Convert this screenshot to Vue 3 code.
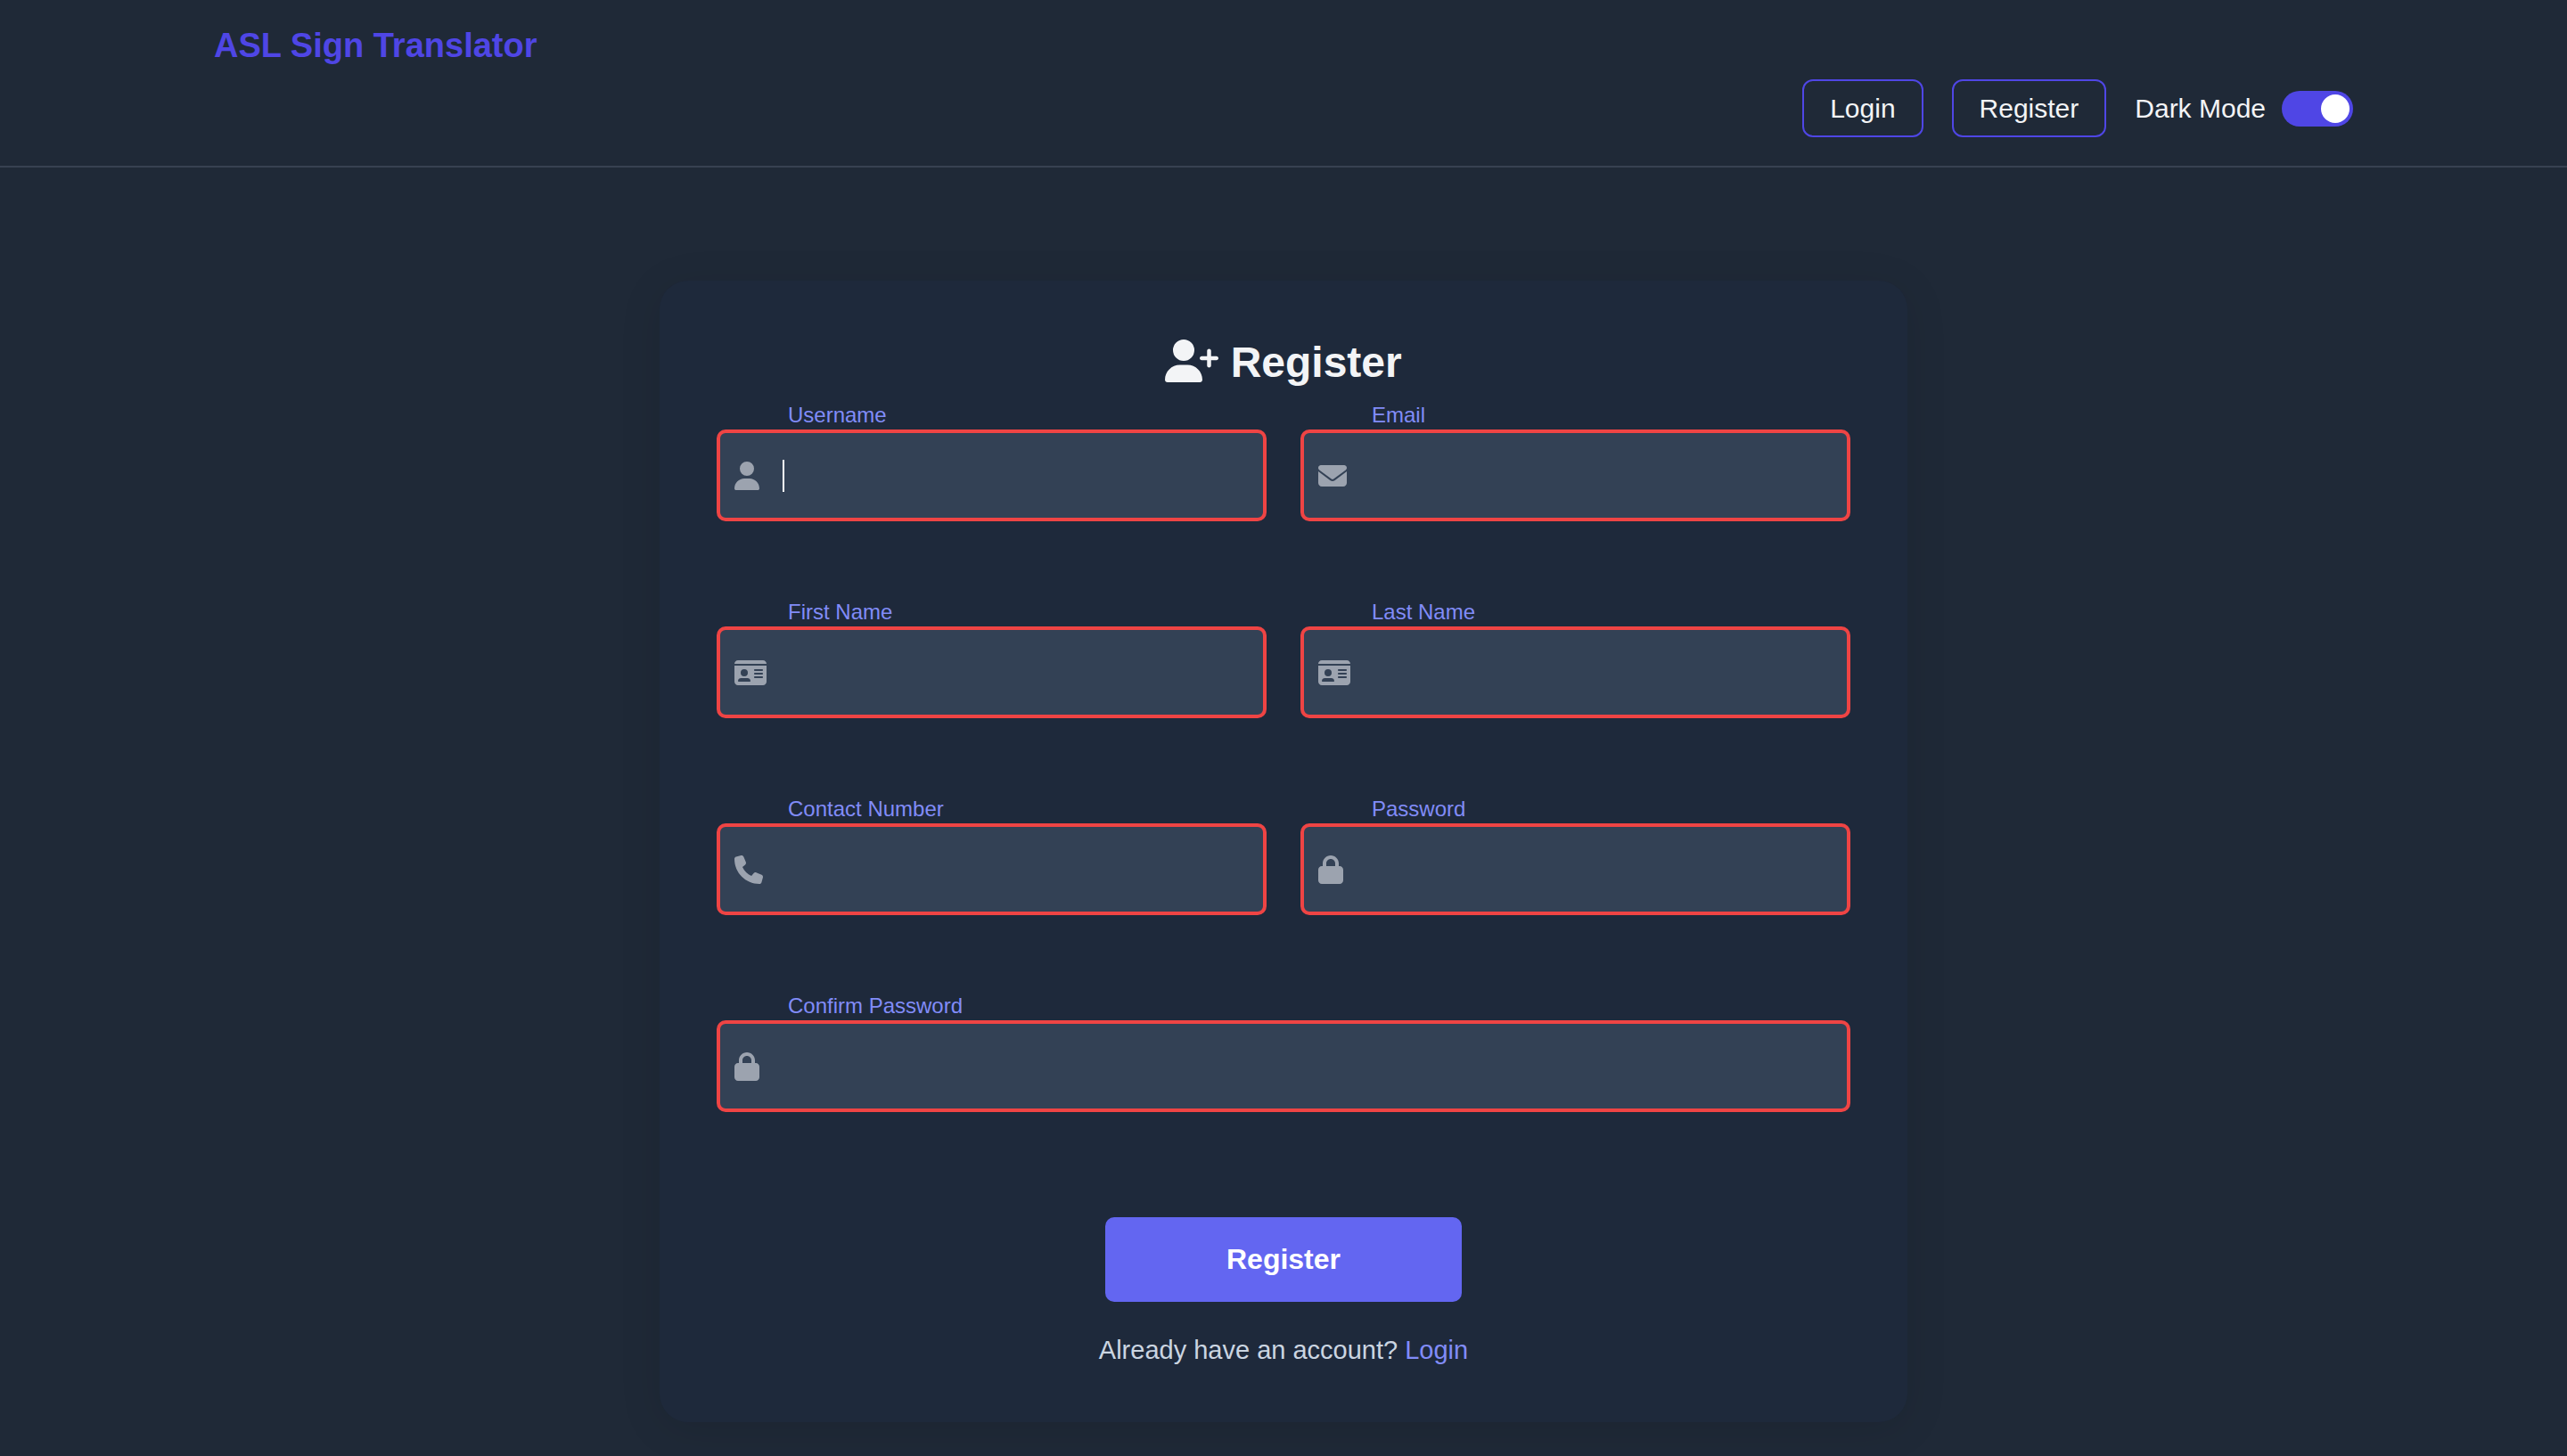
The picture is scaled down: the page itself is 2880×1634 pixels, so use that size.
<script setup>
import { ref, reactive } from 'vue'

const icons = {
  user: { w: 448, d: 'M224 256A128 128 0 1 0 224 0a128 128 0 1 0 0 256zm-45.7 48C79.8 304 0 383.8 0 482.3C0 498.7 13.3 512 29.7 512H418.3c16.4 0 29.7-13.3 29.7-29.7C448 383.8 368.2 304 269.7 304H178.3z' },
  envelope: { w: 512, d: 'M48 64C21.5 64 0 85.5 0 112c0 15.1 7.1 29.3 19.2 38.4L236.8 313.6c11.4 8.5 27 8.5 38.4 0L492.8 150.4c12.1-9.1 19.2-23.3 19.2-38.4c0-26.5-21.5-48-48-48H48zM0 176V384c0 35.3 28.7 64 64 64H448c35.3 0 64-28.7 64-64V176L294.4 339.2c-22.8 17.1-54 17.1-76.8 0L0 176z' },
  idCard: { w: 576, d: 'M0 96l576 0c0-35.3-28.7-64-64-64H64C28.7 32 0 60.7 0 96zm0 32V416c0 35.3 28.7 64 64 64H512c35.3 0 64-28.7 64-64V128H0zM64 405.3c0-29.5 23.9-53.3 53.3-53.3H234.7c29.5 0 53.3 23.9 53.3 53.3c0 5.9-4.8 10.7-10.7 10.7H74.7c-5.9 0-10.7-4.8-10.7-10.7zM176 192a64 64 0 1 1 0 128 64 64 0 1 1 0-128zm176 16c0-8.8 7.2-16 16-16H496c8.8 0 16 7.2 16 16s-7.2 16-16 16H368c-8.8 0-16-7.2-16-16zm0 64c0-8.8 7.2-16 16-16H496c8.8 0 16 7.2 16 16s-7.2 16-16 16H368c-8.8 0-16-7.2-16-16zm0 64c0-8.8 7.2-16 16-16H496c8.8 0 16 7.2 16 16s-7.2 16-16 16H368c-8.8 0-16-7.2-16-16z' },
  phone: { w: 512, d: 'M164.9 24.6c-7.7-18.6-28-28.5-47.4-23.2l-88 24C12.1 30.2 0 46 0 64C0 311.4 200.6 512 448 512c18 0 33.8-12.1 38.6-29.5l24-88c5.3-19.4-4.6-39.7-23.2-47.4l-96-40c-16.3-6.8-35.2-2.1-46.3 11.6L304.7 368C234.3 334.7 177.3 277.7 144 207.3L193.3 167c13.7-11.2 18.4-30 11.6-46.3l-40-96z' },
  lock: { w: 448, d: 'M144 144v48H304V144c0-44.2-35.8-80-80-80s-80 35.8-80 80zM80 192V144C80 64.5 144.5 0 224 0s144 64.5 144 144v48h16c35.3 0 64 28.7 64 64V448c0 35.3-28.7 64-64 64H64c-35.3 0-64-28.7-64-64V256c0-35.3 28.7-64 64-64H80z' },
}

const fields = [
  { id: 'username', label: 'Username', type: 'text', icon: icons.user },
  { id: 'email', label: 'Email', type: 'email', icon: icons.envelope },
  { id: 'first-name', label: 'First Name', type: 'text', icon: icons.idCard },
  { id: 'last-name', label: 'Last Name', type: 'text', icon: icons.idCard },
  { id: 'contact', label: 'Contact Number', type: 'tel', icon: icons.phone },
  { id: 'password', label: 'Password', type: 'password', icon: icons.lock },
  { id: 'confirm', label: 'Confirm Password', type: 'password', icon: icons.lock, wide: true },
]

const form = reactive(Object.fromEntries(fields.map((f) => [f.id, ''])))
const darkMode = ref(true)
</script>

<template>
  <div class="page">
    <header class="header">
      <div class="header-inner">
        <a class="brand" href="#">ASL Sign Translator</a>
        <nav class="nav">
          <a class="nav-link" href="#login">Login</a>
          <a class="nav-link" href="#register">Register</a>
          <label class="theme">
            <span>Dark Mode</span>
            <input v-model="darkMode" class="switch" type="checkbox" />
          </label>
        </nav>
      </div>
    </header>

    <main class="main">
      <form class="card" @submit.prevent>
        <h1 class="title">
          <svg class="title-icon" viewBox="0 0 640 512" fill="currentColor" aria-hidden="true">
            <path d="M96 128a128 128 0 1 1 256 0A128 128 0 1 1 96 128zM0 482.3C0 383.8 79.8 304 178.3 304h91.4C368.2 304 448 383.8 448 482.3c0 16.4-13.3 29.7-29.7 29.7H29.7C13.3 512 0 498.7 0 482.3zM504 312V248H440c-13.3 0-24-10.7-24-24s10.7-24 24-24h64V136c0-13.3 10.7-24 24-24s24 10.7 24 24v64h64c13.3 0 24 10.7 24 24s-10.7 24-24 24H552v64c0 13.3-10.7 24-24 24s-24-10.7-24-24z" />
          </svg>
          Register
        </h1>

        <div class="fields">
          <div v-for="f in fields" :key="f.id" class="field" :class="{ wide: f.wide }">
            <label class="label" :for="f.id">{{ f.label }}</label>
            <div class="control">
              <input :id="f.id" v-model="form[f.id]" class="input" :type="f.type" autocomplete="off" />
              <svg class="icon" :viewBox="`0 0 ${f.icon.w} 512`" fill="currentColor" aria-hidden="true">
                <path :d="f.icon.d" />
              </svg>
              <span v-if="f.id === 'username' && !form.username" class="caret"></span>
            </div>
          </div>
        </div>

        <button class="submit" type="submit">Register</button>
        <p class="note">Already have an account? <a href="#login">Login</a></p>
      </form>
    </main>
  </div>
</template>

<style>
html {
  background: #1f2937;
}
</style>

<style scoped>
.page {
  min-height: 100vh;
  box-sizing: border-box;
  background: #1f2937;
  color: #f3f4f6;
  font-family: "Liberation Sans", Arial, Helvetica, sans-serif;
}

.header {
  padding: 32px;
  border-bottom: 2px solid #374151;
}

.header-inner {
  display: flex;
  flex-direction: column;
  gap: 19px;
  max-width: 2400px;
  margin: 0 auto;
}

.brand {
  align-self: flex-start;
  color: #4f46e5;
  font-size: 38px;
  font-weight: 700;
  line-height: 38px;
  text-decoration: none;
}

.nav {
  display: flex;
  flex-wrap: wrap;
  justify-content: flex-end;
  align-items: center;
  gap: 32px;
  font-size: 30px;
  line-height: 33px;
}

.nav-link {
  padding: 14px 29px;
  border: 2px solid #4f46e5;
  border-radius: 12px;
  color: inherit;
  text-decoration: none;
}

.theme {
  display: flex;
  align-items: center;
  gap: 18px;
}

.switch {
  appearance: none;
  display: flex;
  width: 80px;
  height: 40px;
  margin: 0;
  padding: 4px;
  box-sizing: border-box;
  border-radius: 20px;
  background: #6b7280;
}

.switch::before {
  content: "";
  width: 32px;
  height: 32px;
  border-radius: 50%;
  background: #ffffff;
}

.switch:checked {
  justify-content: flex-end;
  background: #4f46e5;
}

.main {
  display: flex;
  justify-content: center;
  padding: 127px 32px 38px;
}

.card {
  display: flex;
  flex-direction: column;
  align-items: center;
  width: 100%;
  max-width: 1400px;
  padding: 64px;
  box-sizing: border-box;
  border-radius: 32px;
  background: #1e293b;
  box-shadow: 0 8px 48px rgba(0, 0, 0, 0.1);
}

.title {
  margin: 0 0 15px;
  font-size: 48px;
  line-height: 56px;
}

.title-icon {
  width: 60px;
  height: 48px;
  vertical-align: -6px;
}

.fields {
  display: grid;
  grid-template-columns: repeat(2, minmax(0, 1fr));
  gap: 86px 38px;
  width: 100%;
}

.field {
  display: flex;
  flex-direction: column;
}

.wide {
  grid-column: 1 / -1;
}

.label {
  padding-left: 80px;
  color: #818cf8;
  font-size: 24px;
  line-height: 32px;
}

.control {
  position: relative;
  display: flex;
  align-items: center;
}

.input {
  width: 100%;
  height: 103px;
  padding: 0 32px 0 70px;
  box-sizing: border-box;
  border: 4px solid #ef4444;
  border-radius: 10px;
  outline: none;
  background: #334155;
  color: #ffffff;
  font: inherit;
  font-size: 32px;
}

.icon {
  position: absolute;
  left: 20px;
  height: 32px;
  color: #9ca3af;
  pointer-events: none;
}

.caret {
  position: absolute;
  left: 74px;
  width: 2px;
  height: 36px;
  background: #ffffff;
}

.submit {
  width: 400px;
  height: 95px;
  margin: 118px 0 37px;
  border: 0;
  border-radius: 10px;
  background: #6366f1;
  color: #ffffff;
  font: inherit;
  font-size: 32px;
  font-weight: 700;
}

.note {
  margin: 0;
  color: #cbd5e1;
  font-size: 29px;
  line-height: 34px;
}

.note a {
  color: #818cf8;
  text-decoration: none;
}
</style>
